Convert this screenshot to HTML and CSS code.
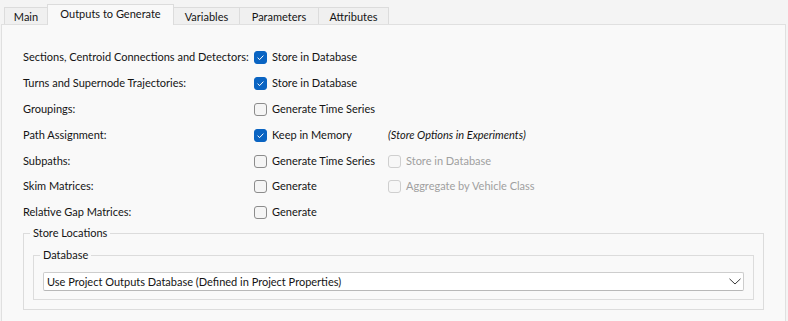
FILE: index.html
```html
<!DOCTYPE html>
<html>
<head>
<meta charset="utf-8">
<link rel="stylesheet" href="styles.css">
</head>
<body>
<div class="window">
  <div class="tabs">
    <div class="tab t-main">Main</div>
    <div class="tab active t-outputs">Outputs to Generate</div>
    <div class="tab t-vars">Variables</div>
    <div class="tab t-params">Parameters</div>
    <div class="tab t-attrs">Attributes</div>
  </div>
  <div class="panel">
    <div class="grid">
      <div class="label">Sections, Centroid Connections and Detectors:</div>
      <div class="check"><span class="box checked"><svg viewBox="0 0 13 13" width="13" height="13"><path d="M3.6 6.7 L5.6 8.6 L9.4 4.6" fill="none" stroke="#fff" stroke-width="1"/></svg></span>Store in Database</div>
      <div></div>

      <div class="label">Turns and Supernode Trajectories:</div>
      <div class="check"><span class="box checked"><svg viewBox="0 0 13 13" width="13" height="13"><path d="M3.6 6.7 L5.6 8.6 L9.4 4.6" fill="none" stroke="#fff" stroke-width="1"/></svg></span>Store in Database</div>
      <div></div>

      <div class="label">Groupings:</div>
      <div class="check"><span class="box"></span>Generate Time Series</div>
      <div></div>

      <div class="label">Path Assignment:</div>
      <div class="check"><span class="box checked"><svg viewBox="0 0 13 13" width="13" height="13"><path d="M3.6 6.7 L5.6 8.6 L9.4 4.6" fill="none" stroke="#fff" stroke-width="1"/></svg></span>Keep in Memory</div>
      <div class="note">(Store Options in Experiments)</div>

      <div class="label">Subpaths:</div>
      <div class="check"><span class="box"></span>Generate Time Series</div>
      <div class="check disabled"><span class="box"></span>Store in Database</div>

      <div class="label">Skim Matrices:</div>
      <div class="check"><span class="box"></span>Generate</div>
      <div class="check disabled"><span class="box"></span>Aggregate by Vehicle Class</div>

      <div class="label">Relative Gap Matrices:</div>
      <div class="check"><span class="box"></span>Generate</div>
      <div></div>
    </div>

    <fieldset class="group outer">
      <legend>Store Locations</legend>
      <fieldset class="group inner">
        <legend>Database</legend>
        <div class="combo">
          <span class="combo-text">Use Project Outputs Database (Defined in Project Properties)</span>
          <svg class="chev" viewBox="0 0 12 7" width="12" height="7"><path d="M0.5 0.8 L6 6 L11.5 0.8" fill="none" stroke="#3a3a3a" stroke-width="1"/></svg>
        </div>
      </fieldset>
    </fieldset>
  </div>
</div>
</body>
</html>
```
FILE: styles.css
```css
html, body {
  margin: 0;
  padding: 0;
  background: #f4f4f4;
}
body {
  font-family: Lato, "Liberation Sans", Arial, sans-serif;
  font-size: 11px;
  color: #141414;
  width: 788px;
  height: 321px;
  overflow: hidden;
}
.window {
  display: flex;
  flex-direction: column;
  height: 321px;
}
.tabs {
  display: flex;
  align-items: flex-end;
  height: 24px;
  padding-left: 4px;
  flex: none;
}
.tab {
  box-sizing: border-box;
  height: 17px;
  border: 1px solid #dcdcdc;
  border-bottom: none;
  background: #f0f0f0;
  margin-left: -1px;
  display: flex;
  align-items: center;
  justify-content: center;
  line-height: 14px;
  padding-top: 1px;
}
.t-main { margin-left: 0; width: 44px; }
.t-outputs { width: 127px; }
.t-vars { width: 67px; }
.t-params { width: 80px; }
.t-attrs { width: 71px; }
.tab.active {
  position: relative;
  z-index: 2;
  height: 21px;
  margin-bottom: -1px;
  background: #f9f9f9;
  padding-top: 0;
  padding-bottom: 2px;
}
.panel {
  flex: 1;
  margin-left: 1px;
  width: 785px;
  box-sizing: border-box;
  border: 1px solid #e0e0e0;
  border-bottom: none;
  background: #f9f9f9;
  padding: 18px 21px 0 21px;
}
.grid {
  display: grid;
  grid-template-columns: 231px 134px 1fr;
  grid-template-rows: 26px 26px 26px 26px 26px 25px 26px;
  align-items: center;
  margin-bottom: 1px;
}
.label {
  white-space: nowrap;
}
.check {
  display: flex;
  align-items: center;
  gap: 5px;
  white-space: nowrap;
}
.box {
  box-sizing: border-box;
  width: 13px;
  height: 13px;
  border: 1px solid #8c8c8c;
  border-radius: 3px;
  background: #f5f5f5;
  flex: none;
  display: block;
  position: relative;
  top: 1px;
}
.box.checked {
  background: #0a64c2;
  border-color: #0a64c2;
}
.box svg {
  display: block;
  margin: -1px;
}
.check.disabled {
  color: #a0a0a0;
}
.check.disabled .box {
  border-color: #cfcfcf;
  background: #f7f7f7;
}
.note {
  font-style: italic;
  white-space: nowrap;
}
.group {
  margin: 0;
  border: 1px solid #dcdcdc;
  min-width: 0;
}
.group legend {
  line-height: 16px;
  padding: 0 3px;
  margin-left: -3px;
}
.outer {
  padding: 6px 9px 9px 9px;
}
.inner {
  padding: 9px 9px 8px 9px;
}
.combo {
  box-sizing: border-box;
  height: 19px;
  border: 1px solid #cdcdcd;
  border-bottom-color: #b8b8b8;
  border-radius: 2px;
  background: #ffffff;
  display: flex;
  align-items: center;
  justify-content: space-between;
  padding: 0 2px 0 3px;
}
.chev {
  display: block;
}
```
